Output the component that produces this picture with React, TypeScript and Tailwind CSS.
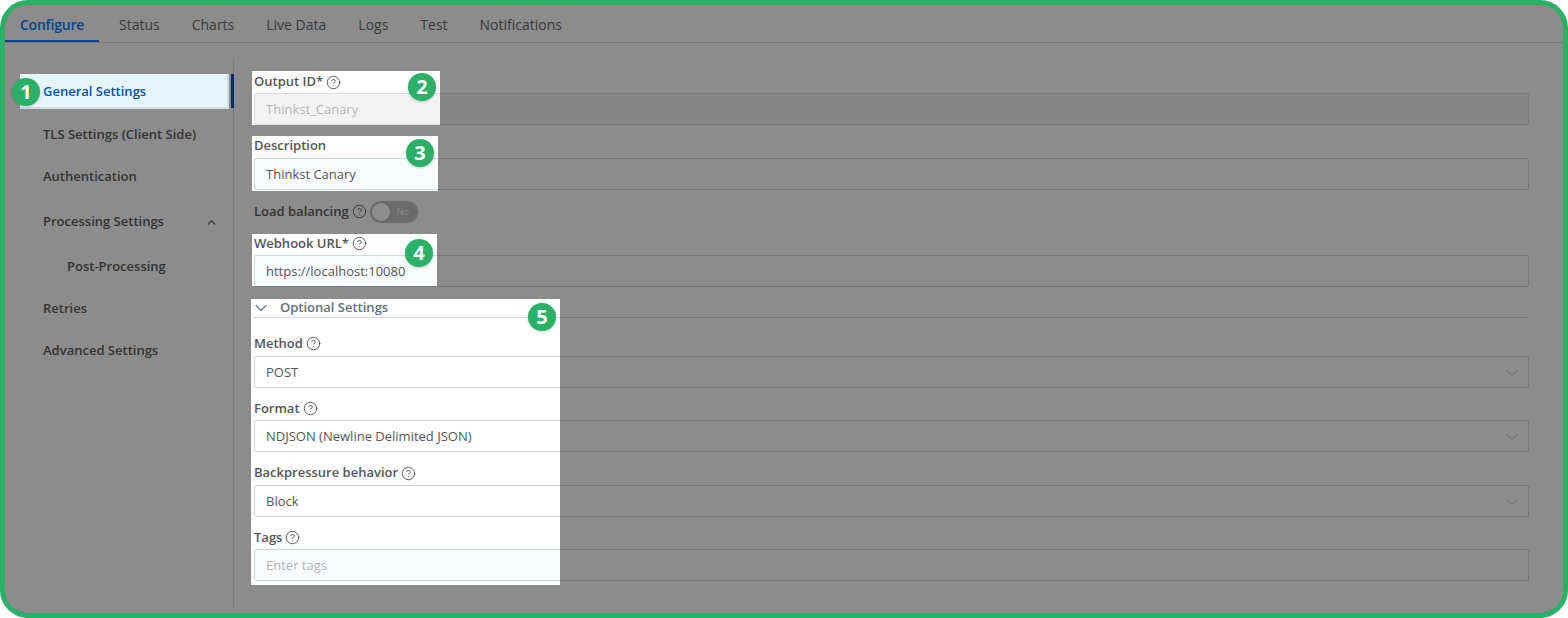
import React from "react";
import { ChevronDown, ChevronUp, CircleHelp } from "lucide-react";

const tabs = ["Status", "Charts", "Live Data", "Logs", "Test", "Notifications"];

const Help = ({ lit }: { lit?: boolean }) => (
  <CircleHelp size={15} strokeWidth={1.5} className={lit ? "ml-[3px] text-[#555]" : "ml-[3px] text-[#363636]"} />
);

const Label = ({
  text,
  help = true,
  lit,
  className = "h-[22px]",
}: {
  text: string;
  help?: boolean;
  lit?: boolean;
  className?: string;
}) => (
  <div className={`flex items-center text-[13px] font-semibold ${lit ? "text-[#555]" : "text-[#333]"} ${className}`}>
    {text}
    {help && <Help lit={lit} />}
  </div>
);

const Input = ({
  value,
  lit,
  tone = "normal",
  select,
}: {
  value?: string;
  lit?: boolean;
  tone?: "normal" | "disabled" | "placeholder" | "select";
  select?: boolean;
}) => {
  const surface = lit
    ? tone === "disabled"
      ? "bg-[#f3f3f3] border-[#d9dde1]"
      : tone === "select"
        ? "bg-white border-[#cbd5dc]"
        : "bg-[#f8fafc] border-[#cbd5dc]"
    : tone === "disabled"
      ? "bg-[#868686] border-[#74797d]"
      : tone === "select"
        ? "bg-[#8c8c8c] border-[#72777b]"
        : "bg-[#8a8a8b] border-[#72777b]";
  const text = lit
    ? tone === "disabled" || tone === "placeholder"
      ? "text-[#b4b4b4]"
      : "text-[#555]"
    : "text-transparent";
  return (
    <div className={`flex h-[32px] w-[1275px] shrink-0 items-center justify-between rounded-[2px] border pl-[11px] pr-[6px] pt-[1px] text-[13px] ${surface} ${text}`}>
      <span>{value}</span>
      {select && <ChevronDown size={20} strokeWidth={1.2} className="text-[#6c6c6c]" />}
    </div>
  );
};

const Badge = ({ n, className }: { n: number; className: string }) => (
  <div className={`absolute flex h-[28px] w-[28px] items-center justify-center rounded-full bg-[#2bb067] text-[20px] font-bold text-white shadow-[0_1px_3px_rgba(0,0,0,0.2)] ${className}`}>
    {n}
  </div>
);

const Nav = ({ text, className = "" }: { text: string; className?: string }) => (
  <div className={`flex items-center text-[13px] font-semibold text-[#333] ${className}`}>{text}</div>
);

export default function App() {
  return (
    <div className="h-[618px] w-[1568px] overflow-hidden bg-white" style={{ fontFamily: '"Open Sans", sans-serif' }}>
      <div className="relative h-full w-full overflow-hidden rounded-[28px] border-[5px] border-[#2bb067] bg-[#8c8c8c]">
        {/* tab strip */}
        <div className="flex h-[38px] items-end border-b border-[#7b7b7b]">
          <div className="mr-[4px] flex h-[38px] w-[94px] items-center justify-center border-b-2 border-[#00468f] pt-[4px] text-[14px] font-semibold tracking-[-0.2px] text-[#00468f]">
            Configure
          </div>
          {tabs.map((t) => (
            <div key={t} className="flex h-[38px] items-center px-[16px] pt-[3px] text-[14px] text-[#3a3a3a]">
              {t}
            </div>
          ))}
        </div>

        <div className="flex h-[570px]">
          {/* left menu */}
          <div className="mt-[15px] h-[550px] w-[229px] shrink-0 border-r border-[#7d7d7d] pt-[16px]">
            <div className="mr-[-1px] flex h-[34px] justify-end">
              <div className="h-full w-[3px] bg-[#00306c]" />
            </div>
            <Nav text="TLS Settings (Client Side)" className="mt-[10px] h-[34px] pl-[38px]" />
            <Nav text="Authentication" className="mt-[8px] h-[34px] pl-[38px]" />
            <div className="mt-[11px] flex h-[34px] items-center justify-between pr-[15px]">
              <Nav text="Processing Settings" className="pl-[38px]" />
              <ChevronUp size={13} strokeWidth={2.4} className="text-[#333]" />
            </div>
            <Nav text="Post-Processing" className="mt-[11px] h-[34px] pl-[62px]" />
            <Nav text="Retries" className="mt-[8px] h-[34px] pl-[38px]" />
            <Nav text="Advanced Settings" className="mt-[8px] h-[34px] pl-[38px]" />
          </div>

          {/* form, dimmed */}
          <div className="ml-[20px] flex flex-col pt-[28px]">
            <Label text="Output ID*" />
            <Input tone="disabled" />
            <div className="mt-[11px]">
              <Label text="Description" help={false} className="h-[22px] pb-[2px]" />
            </div>
            <Input />
            <div className="mt-[10px] flex h-[23px] items-center text-[13px] font-semibold text-[#333]">
              Load balancing
              <Help />
              <div className="ml-[3px] flex h-[22px] w-[48px] items-center rounded-full bg-[#6b6b6b] pl-[2px]">
                <div className="h-[18px] w-[18px] rounded-full bg-[#8e8e8e]" />
                <span className="ml-[7px] text-[9px] font-normal text-[#8a8a8a]">No</span>
              </div>
            </div>
            <div className="mt-[10px]">
              <Label text="Webhook URL*" className="h-[22px] pb-[2px]" />
            </div>
            <Input />
            <div className="mt-[12px]">
              <div className="flex h-[19px] items-center border-b border-[#777c80]" />
            </div>
            <div className="mt-[16px]">
              <Label text="Method" className="h-[22px] pb-[3px]" />
            </div>
            <Input tone="select" select />
            <div className="mt-[10px]">
              <Label text="Format" className="h-[22px] pb-[1px]" />
            </div>
            <Input tone="select" select />
            <div className="mt-[11px]">
              <Label text="Backpressure behavior" className="h-[22px] pb-[2px]" />
            </div>
            <Input tone="select" select />
            <div className="mt-[10px]">
              <Label text="Tags" className="h-[22px] pb-[1px]" />
            </div>
            <Input />
          </div>
        </div>

        {/* callout windows over the dimmed page */}
        <div className="absolute left-[15px] top-[69px] flex h-[35px] w-[209px] items-center border-b-2 border-r-2 border-[#cfdde6] bg-[#e5f5fd] pl-[23px] pt-[3px] text-[13px] font-semibold text-[#0b4fa8]">
          General Settings
        </div>

        <div className="absolute left-[247px] top-[66px] h-[54px] w-[188px] overflow-hidden bg-white pl-[2px]">
          <Label text="Output ID*" lit />
          <Input value="Thinkst_Canary" tone="disabled" lit />
        </div>

        <div className="absolute left-[247px] top-[131px] h-[55px] w-[186px] overflow-hidden bg-white pl-[2px]">
          <Label text="Description" help={false} lit className="h-[22px] pb-[2px]" />
          <Input value="Thinkst Canary" lit />
        </div>

        <div className="absolute left-[247px] top-[229px] h-[52px] w-[185px] overflow-hidden bg-white pl-[2px]">
          <Label text="Webhook URL*" lit className="h-[21px] pb-[2px]" />
          <Input value="https://localhost:10080" lit />
        </div>

        <div className="absolute left-[246px] top-[294px] h-[286px] w-[309px] overflow-hidden bg-white pl-[3px]">
          <div className="flex h-[19px] w-[1275px] items-center border-b border-[#d5dde3]">
            <ChevronDown size={20} strokeWidth={1.3} className="ml-[-3px] text-[#5b7186]" />
            <span className="ml-[9px] text-[13px] font-semibold text-[#5b7186]">Optional Settings</span>
          </div>
          <div className="mt-[16px]">
            <Label text="Method" lit className="h-[22px] pb-[3px]" />
          </div>
          <Input value="POST" tone="select" lit />
          <div className="mt-[10px]">
            <Label text="Format" lit className="h-[22px] pb-[1px]" />
          </div>
          <Input value="NDJSON (Newline Delimited JSON)" tone="select" lit />
          <div className="mt-[11px]">
            <Label text="Backpressure behavior" lit className="h-[22px] pb-[2px]" />
          </div>
          <Input value="Block" tone="select" lit />
          <div className="mt-[10px]">
            <Label text="Tags" lit className="h-[22px] pb-[1px]" />
          </div>
          <Input value="Enter tags" tone="placeholder" lit />
        </div>

        <Badge n={1} className="left-[7px] top-[73px]" />
        <Badge n={2} className="left-[403px] top-[68px]" />
        <Badge n={3} className="left-[401px] top-[134px]" />
        <Badge n={4} className="left-[400px] top-[234px]" />
        <Badge n={5} className="left-[523px] top-[298px]" />
      </div>
    </div>
  );
}
